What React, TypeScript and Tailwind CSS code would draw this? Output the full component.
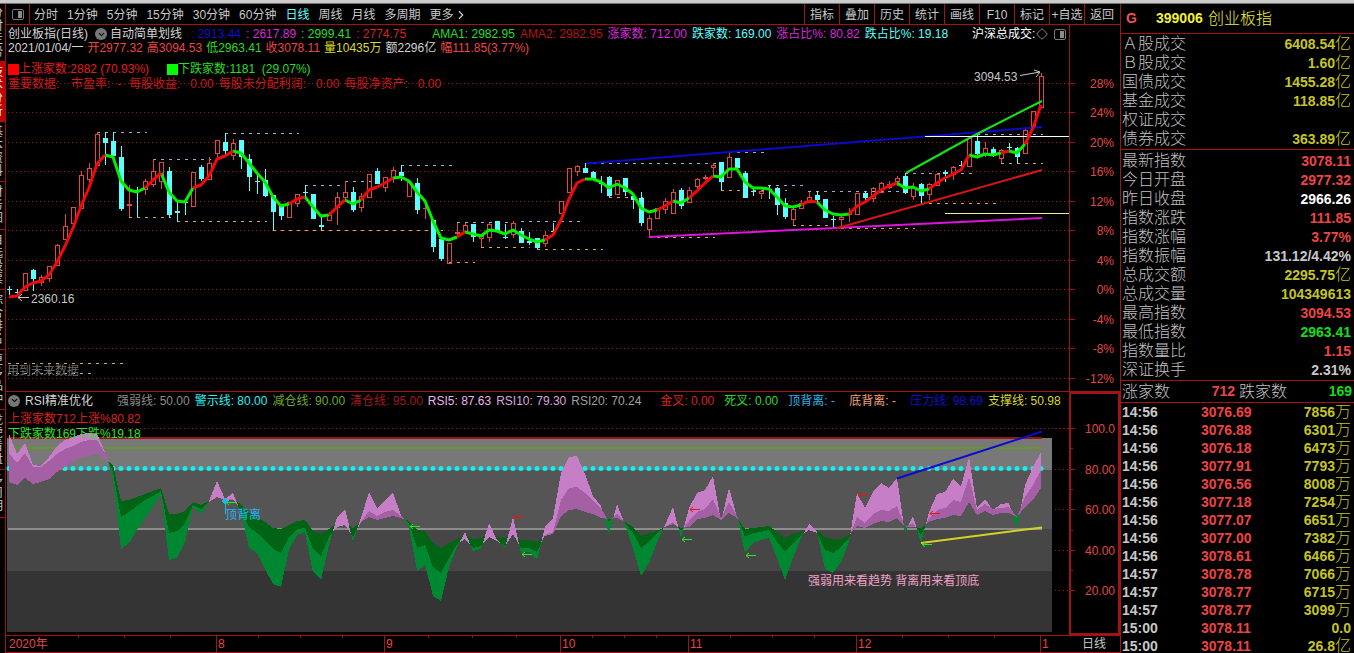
import React, { useState } from "react"
import { ChevronDown, ChevronRight, Diamond } from "lucide-react"

type Candle = [string, number, number, number, number]

// [kind, bodyTop, bodyBottom, high, low]  u = up, d = down, x = flat day, r = flat red day
const candles: Candle[] = [
  ["x", 289, 290, 286, 295], ["x", 292, 293, 289, 294], ["u", 273, 290, 273, 290], ["d", 270, 279, 269, 291],
  ["u", 277, 282, 275, 286], ["u", 266, 278, 266, 282], ["u", 245, 265, 244, 265], ["u", 226, 239, 214, 239],
  ["u", 207, 223, 207, 223], ["u", 175, 208, 171, 208], ["u", 168, 179, 163, 182], ["u", 134, 165, 132, 165],
  ["d", 138, 143, 132, 165], ["d", 141, 156, 132, 157], ["d", 157, 209, 146, 211], ["r", 204, 206, 185, 217],
  ["x", 190, 191, 187, 217], ["u", 181, 189, 179, 195], ["u", 171, 184, 159, 187], ["u", 162, 181, 162, 189],
  ["d", 171, 215, 167, 218], ["x", 211, 213, 202, 222], ["x", 202, 203, 202, 215], ["u", 172, 206, 172, 206],
  ["d", 167, 179, 165, 181], ["u", 163, 179, 157, 179], ["u", 140, 153, 140, 158], ["d", 142, 151, 133, 155],
  ["u", 143, 155, 139, 160], ["d", 140, 157, 140, 169], ["d", 159, 177, 154, 191], ["x", 181, 182, 175, 194],
  ["d", 180, 196, 169, 197], ["d", 195, 212, 195, 230], ["d", 206, 216, 206, 220], ["u", 202, 217, 202, 218],
  ["u", 194, 203, 194, 207], ["x", 192, 193, 185, 197], ["d", 194, 219, 194, 219], ["x", 225, 227, 215, 230],
  ["u", 215, 220, 212, 220], ["u", 197, 207, 192, 225], ["u", 192, 197, 181, 201], ["d", 192, 210, 187, 212],
  ["u", 196, 207, 193, 212], ["u", 174, 197, 174, 198], ["d", 171, 184, 168, 184], ["u", 177, 187, 177, 192],
  ["u", 170, 177, 167, 183], ["d", 172, 176, 165, 181], ["u", 182, 196, 182, 196], ["d", 183, 210, 178, 214],
  ["r", 208, 209, 201, 219], ["d", 220, 247, 220, 252], ["d", 239, 259, 239, 261], ["u", 243, 263, 243, 263],
  ["r", 232, 234, 223, 237], ["u", 225, 231, 223, 231], ["d", 224, 237, 224, 242], ["u", 236, 238, 236, 247],
  ["u", 224, 237, 223, 242], ["d", 221, 232, 221, 232], ["x", 237, 238, 224, 239], ["u", 223, 234, 221, 238],
  ["d", 231, 243, 228, 243], ["x", 241, 243, 232, 245], ["d", 238, 248, 238, 249], ["u", 235, 243, 231, 247],
  ["x", 231, 232, 223, 232], ["u", 201, 213, 201, 213], ["u", 168, 192, 168, 192], ["u", 166, 171, 165, 176],
  ["d", 168, 173, 163, 173], ["d", 172, 180, 171, 180], ["x", 183, 184, 176, 193], ["d", 177, 196, 176, 197],
  ["u", 180, 194, 180, 195], ["d", 178, 192, 178, 196], ["d", 196, 200, 196, 209], ["d", 198, 223, 192, 226],
  ["u", 218, 229, 215, 237], ["u", 208, 218, 208, 219], ["u", 201, 209, 198, 214], ["u", 192, 213, 189, 213],
  ["d", 190, 206, 188, 209], ["u", 190, 202, 187, 202], ["u", 179, 186, 178, 189], ["r", 177, 179, 175, 180],
  ["u", 165, 167, 163, 176], ["d", 162, 182, 162, 190], ["u", 157, 177, 153, 177], ["d", 158, 168, 158, 170],
  ["d", 173, 198, 171, 198], ["x", 191, 192, 187, 196], ["u", 191, 193, 190, 199], ["x", 189, 190, 185, 199],
  ["d", 188, 205, 187, 215], ["d", 203, 217, 198, 219], ["u", 209, 219, 208, 225], ["u", 203, 208, 200, 209],
  ["u", 197, 202, 192, 203], ["d", 195, 200, 191, 202], ["d", 199, 218, 199, 218], ["x", 219, 220, 216, 227],
  ["u", 217, 219, 215, 227], ["r", 213, 215, 208, 222], ["u", 193, 214, 193, 214], ["d", 193, 198, 191, 202],
  ["u", 188, 198, 187, 202], ["u", 183, 192, 182, 193], ["u", 184, 187, 181, 189], ["u", 178, 181, 176, 186],
  ["d", 176, 193, 173, 194], ["u", 187, 196, 183, 200], ["d", 184, 196, 183, 203], ["u", 184, 194, 183, 200],
  ["u", 174, 185, 173, 185], ["x", 172, 174, 170, 182], ["u", 167, 174, 166, 180], ["x", 165, 166, 161, 167],
  ["u", 138, 166, 138, 166], ["d", 141, 154, 134, 155], ["u", 148, 153, 142, 157], ["d", 149, 156, 147, 157],
  ["u", 150, 158, 149, 163], ["x", 147, 148, 143, 152], ["d", 148, 157, 147, 163], ["u", 130, 153, 129, 153],
  ["u", 111, 127, 111, 127], ["u", 76, 107, 73, 107],
]

const average = [
  297, 296, 287, 283, 281, 275, 262, 246, 228, 206, 188, 164, 155, 157, 181, 190, 192, 188, 180, 173,
  192, 201, 202, 188, 185, 176, 159, 156, 151, 153, 163, 173, 182, 197, 206, 204, 199, 197, 207, 216,
  215, 207, 200, 204, 200, 190, 187, 183, 178, 177, 181, 192, 201, 221, 238, 240, 237, 232, 234, 236,
  230, 231, 234, 230, 235, 239, 242, 240, 235, 220, 199, 183, 179, 179, 182, 188, 184, 188, 194, 208,
  212, 210, 206, 201, 203, 198, 191, 183, 176, 177, 169, 169, 182, 188, 188, 189, 197, 206, 207, 205,
  201, 202, 210, 214, 215, 214, 206, 202, 196, 190, 186, 183, 188, 187, 191, 189, 183, 178, 174, 170,
  155, 157, 154, 155, 153, 151, 153, 144, 128, 105,
]

// stretches of bars where the average is drawn red, the rest is green
const redRanges = [
  [0, 12], [17, 19], [23, 28], [35, 37], [40, 42], [44, 48], [56, 57], [67, 72], [81, 83],
  [85, 88], [99, 101], [105, 111], [115, 120], [124, 125], [127, 129],
]
const greenRanges = redRanges.slice(1).map((r, i) => [redRanges[i][1], r[0]])

const highDashes = [
  [97, 147, 132], [153, 211, 159], [225, 299, 133], [305, 340, 185], [345, 394, 181], [401, 452, 165],
  [457, 514, 222], [521, 580, 221], [585, 724, 163], [729, 764, 152], [768, 803, 185], [808, 900, 191],
  [905, 973, 173], [977, 1043, 134], [8, 91, 373],
]
const lowDashes = [
  [129, 171, 217], [177, 267, 221], [273, 443, 230], [449, 475, 262], [481, 530, 247], [537, 603, 249],
  [609, 643, 197], [649, 715, 237], [721, 787, 190], [793, 833, 225], [833, 915, 228], [921, 997, 203],
  [1001, 1043, 163], [8, 123, 363],
]

const priceGrid = [
  [83, "28%"], [112, "24%"], [142, "20%"], [171, "16%"], [201, "12%"], [230, "8%"],
  [260, "4%"], [289, "0%"], [319, "-4%"], [348, "-8%"], [378, "-12%"],
] as [number, string][]

const rsi5 = [
  434, 454, 443, 465, 466, 457, 446, 440, 437, 434, 433, 434, 452, 478, 549, 543, 530, 518, 507, 494,
  560, 558, 542, 506, 515, 501, 481, 499, 493, 513, 548, 553, 569, 584, 587, 550, 535, 532, 572, 580,
  545, 517, 509, 542, 518, 492, 508, 500, 493, 515, 527, 571, 565, 596, 601, 567, 547, 532, 551, 549,
  523, 540, 548, 517, 553, 552, 560, 527, 518, 473, 457, 456, 474, 496, 506, 534, 504, 525, 548, 576,
  563, 542, 525, 507, 538, 508, 493, 490, 476, 521, 488, 517, 553, 543, 540, 538, 558, 580, 558, 538,
  524, 532, 569, 573, 562, 542, 493, 508, 492, 483, 488, 478, 533, 516, 543, 512, 494, 492, 479, 486,
  457, 508, 499, 510, 504, 503, 529, 485, 467, 452,
]
const rsi10 = [
  453, 463, 453, 467, 467, 461, 454, 449, 446, 442, 440, 440, 453, 472, 517, 512, 506, 500, 496, 491,
  533, 531, 523, 505, 509, 502, 497, 500, 499, 510, 527, 533, 541, 549, 553, 537, 529, 528, 549, 556,
  537, 527, 525, 537, 522, 511, 516, 512, 510, 516, 523, 548, 545, 567, 573, 558, 544, 539, 548, 546,
  537, 541, 546, 534, 548, 548, 552, 535, 532, 500, 488, 487, 493, 501, 508, 522, 513, 523, 533, 548,
  542, 533, 527, 522, 531, 521, 512, 509, 499, 518, 502, 516, 537, 533, 532, 530, 542, 552, 543, 535,
  530, 533, 550, 553, 547, 538, 517, 523, 514, 510, 511, 506, 527, 523, 535, 518, 510, 508, 500, 502,
  477, 510, 504, 509, 508, 507, 517, 497, 485, 470,
]
const rsi20 = [
  482, 485, 478, 484, 482, 479, 472, 467, 461, 457, 456, 453, 459, 465, 501, 500, 497, 494, 491, 488,
  514, 514, 511, 502, 505, 501, 496, 500, 500, 504, 513, 517, 522, 528, 529, 525, 521, 520, 531, 534,
  529, 523, 521, 528, 522, 517, 520, 518, 516, 518, 521, 530, 531, 543, 548, 543, 539, 534, 539, 538,
  533, 537, 538, 533, 540, 540, 542, 536, 534, 516, 510, 509, 512, 514, 518, 519, 518, 522, 527, 536,
  533, 531, 527, 524, 528, 527, 519, 518, 515, 520, 513, 518, 529, 528, 527, 526, 532, 538, 534, 532,
  528, 530, 537, 539, 539, 535, 526, 528, 524, 521, 522, 518, 527, 527, 528, 522, 519, 518, 515, 516,
  502, 515, 511, 515, 513, 513, 517, 507, 500, 488,
]

const rsiGrid = [
  [428, "100.0"], [469, "80.00"], [509, "60.00"], [550, "40.00"], [590, "20.00"],
] as [number, string][]

const months = [[216, "8"], [384, "9"], [560, "10"], [688, "11"], [856, "12"], [1040, "1"]] as [number, string][]
const weekTicks = [78, 124, 170, 258, 300, 342, 428, 472, 516, 592, 624, 656, 730, 772, 814, 902, 948, 994]

const xAt = (i: number) => 9 + i * 8

function linePoints(from: number, to: number) {
  return average.slice(from, to + 1).map((y, k) => `${xAt(from + k)},${y}`).join(" ")
}

// Areas between two lines, split where they cross: [above, below]
function bands(a: number[], b: number[]) {
  let above = ""
  let below = ""
  const add = (isAbove: boolean, d: string) => {
    if (isAbove) above += d
    else below += d
  }
  for (let i = 0; i < a.length - 1; i++) {
    const x0 = xAt(i)
    const x1 = xAt(i + 1)
    const d0 = a[i] - b[i]
    const d1 = a[i + 1] - b[i + 1]
    if (d0 * d1 < 0) {
      const t = d0 / (d0 - d1)
      const cx = x0 + t * 8
      const cy = a[i] + t * (a[i + 1] - a[i])
      add(d0 < 0, `M${x0} ${a[i]}L${cx} ${cy}L${x0} ${b[i]}Z`)
      add(d1 < 0, `M${x1} ${a[i + 1]}L${cx} ${cy}L${x1} ${b[i + 1]}Z`)
    } else {
      add(d0 + d1 < 0, `M${x0} ${a[i]}L${x1} ${a[i + 1]}L${x1} ${b[i + 1]}L${x0} ${b[i]}Z`)
    }
  }
  return [above, below]
}

const sideTabs: [string, string][] = [
  ["分时走势", "h-[58px]"], ["技术分析", "h-[60px]"], ["基本资料", "h-[60px]"], ["财务图", "h-[48px]"],
  ["自选股票", "h-[60px]"], ["综合排名", "h-[60px]"], ["更多品种", "h-[60px]"], ["龙虎看盘", "h-[60px]"],
  ["多周期", "h-[48px]"],
]

const periods = ["分时", "1分钟", "5分钟", "15分钟", "30分钟", "60分钟", "日线", "周线", "月线", "多周期"]
const tools = ["指标", "叠加", "历史", "统计", "画线", "F10", "标记", "+自选", "返回"]

const turnover = [
  ["Ａ股成交", "6408.54", "亿"], ["Ｂ股成交", "1.60", "亿"], ["国债成交", "1455.28", "亿"],
  ["基金成交", "118.85", "亿"], ["权证成交", "", ""], ["债券成交", "363.89", "亿"],
]

const quote = [
  ["最新指数", "3078.11", "", "text-[#ee4444]"],
  ["今日开盘", "2977.32", "", "text-[#ee4444]"],
  ["昨日收盘", "2966.26", "", "text-white"],
  ["指数涨跌", "111.85", "", "text-[#ee4444]"],
  ["指数涨幅", "3.77%", "", "text-[#ee4444]"],
  ["指数振幅", "131.12/4.42%", "", "text-[#c8c8c8]"],
  ["总成交额", "2295.75", "亿", "text-[#c4c424]"],
  ["总成交量", "104349613", "", "text-[#c4c424]"],
  ["最高指数", "3094.53", "", "text-[#ee4444]"],
  ["最低指数", "2963.41", "", "text-[#16dc16]"],
  ["指数量比", "1.15", "", "text-[#ee4444]"],
  ["深证换手", "2.31%", "", "text-[#c8c8c8]"],
]

const ticks = [
  ["14:56", "3076.69", "7856", "万"], ["14:56", "3076.88", "6301", "万"], ["14:56", "3076.18", "6473", "万"],
  ["14:56", "3077.91", "7793", "万"], ["14:56", "3076.56", "8008", "万"], ["14:56", "3077.18", "7254", "万"],
  ["14:56", "3077.07", "6651", "万"], ["14:56", "3077.00", "7382", "万"], ["14:56", "3078.61", "6466", "万"],
  ["14:57", "3078.78", "7066", "万"], ["14:57", "3078.77", "6715", "万"], ["14:57", "3078.77", "3099", "万"],
  ["15:00", "3078.11", "0.0", ""], ["15:00", "3078.11", "26.8", "亿"],
]

function PanelIcon() {
  return (
    <svg className="h-[11px] w-3 shrink-0" viewBox="0 0 12 11" fill="none">
      <rect x="0.5" y="0.5" width="11" height="10" rx="1.5" stroke="#7a7a7a" />
      <rect x="6" y="2" width="4" height="7" fill="#8a8a8a" />
    </svg>
  )
}

function RoundToggle({ label }: { label: string }) {
  return (
    <button aria-label={label} className="flex h-3 w-3 shrink-0 items-center justify-center rounded-full bg-[#777] text-black">
      <ChevronDown size={9} strokeWidth={3} />
    </button>
  )
}

function SideTabs() {
  return (
    <nav className="flex w-[6px] shrink-0 flex-col overflow-hidden border-r border-[#a01414] text-[12px]">
      {sideTabs.map(([name, height], i) => (
        <button
          key={name}
          className={`${height} flex shrink-0 flex-col items-end justify-center border-b border-[#a01414] pr-0.5 leading-[13px] ${i === 1 ? "bg-[#c00000] text-white" : "text-[#c8c8c8]"}`}
        >
          {name.split("").map((c) => <span key={c}>{c}</span>)}
        </button>
      ))}
    </nav>
  )
}

function Toolbar() {
  const [period, setPeriod] = useState("日线")
  return (
    <div className="flex h-[21px] items-stretch border-b border-[#a01414] text-[12px] text-[#c8c8c8]">
      <button aria-label="面板" className="flex w-6 shrink-0 items-center justify-center border-r border-[#a01414]">
        <PanelIcon />
      </button>
      <div className="flex min-w-0 flex-1 items-center gap-[9px] overflow-hidden whitespace-nowrap pl-1 pt-px">
        {periods.map((p) => (
          <button key={p} onClick={() => setPeriod(p)} className={p === period ? "text-[#5cffff]" : ""}>
            {p}
          </button>
        ))}
        <button className="flex items-center">更多<ChevronRight size={14} strokeWidth={2} /></button>
      </div>
      {tools.map((t) => (
        <button key={t} className="w-[35px] shrink-0 whitespace-nowrap border-l border-[#a01414] pt-px text-center">{t}</button>
      ))}
      <div className="w-px" />
    </div>
  )
}

function PriceHeader() {
  return (
    <div className="flex whitespace-nowrap text-[12px]">
      <div className="min-w-0 flex-1 overflow-hidden border-r border-[#a01414] pl-0.5 pt-px">
        <div className="flex h-4 items-center gap-[5px] leading-4">
          <span className="w-[82px] text-[#d4d4d4]">创业板指(日线)</span>
          <RoundToggle label="指标菜单" />
          <span className="-ml-0.5 w-[76px] text-[#d4d4d4]">自动简单划线</span>
          <span className="text-[#1010c8]">: 2913.44</span>
          <span className="text-[#dc28dc]">: 2617.89</span>
          <span className="text-[#28dc28]">: 2999.41</span>
          <span className="w-[71px] text-[#dc2020]">: 2774.75</span>
          <span className="text-[#28dc28]">AMA1: 2982.95</span>
          <span className="text-[#b81414]">AMA2: 2982.95</span>
          <span className="text-[#dc28dc]">涨家数: 712.00</span>
          <span className="text-[#5cffff]">跌家数: 169.00</span>
          <span className="text-[#dc28dc]">涨占比%: 80.82</span>
          <span className="text-[#5cffff]">跌占比%: 19.18</span>
          <div className="ml-auto flex items-center pr-[3px]">
            <span className="w-16 text-white">沪深总成交:</span>
            <button aria-label="选择" className="w-[18px] text-[#8a8a8a]"><Diamond size={12} strokeWidth={2} /></button>
            <PanelIcon />
          </div>
        </div>
        <div className="flex h-[13px] items-center gap-1 leading-[13px]">
          <span className="text-[#d4d4d4]">2021/01/04/一</span>
          <span className="text-[#ee4444]">开2977.32</span>
          <span className="text-[#ee4444]">高3094.53</span>
          <span className="text-[#28dc28]">低2963.41</span>
          <span className="text-[#ee4444]">收3078.11</span>
          <span className="text-[#dcdc28]">量10435万</span>
          <span className="text-[#d4d4d4]">额2296亿</span>
          <span className="text-[#ee4444]">幅111.85(3.77%)</span>
        </div>
      </div>
      <div className="w-[50px] shrink-0" />
    </div>
  )
}

function CandleMark({ c, i }: { c: Candle; i: number }) {
  const [kind, top, bottom, high, low] = c
  const x = xAt(i)
  if (kind === "u") {
    return (
      <g stroke="#e04848" fill="none">
        {high < top && <path d={`M${x + 0.5} ${high}V${top}`} />}
        {low > bottom && <path d={`M${x + 0.5} ${bottom}V${low}`} />}
        <rect x={x - 1.5} y={top + 0.5} width="4" height={bottom - top} />
      </g>
    )
  }
  return (
    <g fill={kind === "r" ? "#e04848" : "#5cffff"}>
      <rect x={x} y={high} width="1" height={low - high} />
      <rect x={x - 2} y={top} width="5" height={Math.max(1, bottom - top)} />
    </g>
  )
}

function PriceChart() {
  return (
    <div className="relative text-[12px]">
      <svg className="block w-full" viewBox="6 55 1114 336" fontSize="12">
        <g stroke="#a01414" shapeRendering="crispEdges">
          <path d="M1069.5 55V391" />
          {priceGrid.map(([y]) => (
            <React.Fragment key={y}>
              <path d={`M8 ${y + 0.5}H1069`} strokeDasharray="1 3" />
              <path d={`M1069 ${y + 0.5}H1075`} />
            </React.Fragment>
          ))}
        </g>
        <g fill="#e04848" textAnchor="end">
          {priceGrid.map(([y, label]) => (
            <text key={label} x="1114" y={y + 5}>{label}</text>
          ))}
        </g>
        <g stroke="#b4a0dc" strokeDasharray="3 5" shapeRendering="crispEdges">
          {highDashes.map(([x1, x2, y]) => <path key={`${x1}-${y}`} d={`M${x1} ${y + 0.5}H${x2}`} />)}
        </g>
        <g stroke="#dcaa46" strokeDasharray="3 5" shapeRendering="crispEdges">
          {lowDashes.map(([x1, x2, y]) => <path key={`${x1}-${y}`} d={`M${x1} ${y + 0.5}H${x2}`} />)}
        </g>
        <g shapeRendering="crispEdges">
          {candles.map((c, i) => <CandleMark key={i} c={c} i={i} />)}
        </g>
        <g fill="none" strokeWidth="2">
          <path d="M586 163.500L1042 127" stroke="#0a0ac8" />
          <path d="M649 237L1042 218" stroke="#dc14dc" />
          <path d="M836 228.500L1042 170" stroke="#d81414" />
          <path d="M906 173L973 136L1042 101" stroke="#14e614" />
        </g>
        <path d="M925 136.500H1069" stroke="#ffffff" />
        <path d="M945 213.500H1069" stroke="#f0f08c" />
        <g fill="none" strokeWidth="3" strokeLinejoin="round">
          {greenRanges.map(([a, b]) => <polyline key={a} points={linePoints(a, b)} stroke="#00f000" />)}
          {redRanges.map(([a, b]) => <polyline key={a} points={linePoints(a, b)} stroke="#f00a0a" />)}
        </g>
        <g stroke="#c8c8c8" fill="none">
          <path d="M18 297.500H29M22 294L18 297.500L22 301" />
          <path d="M1020 75.500L1040 72M1034 70L1040 72L1036 77" />
        </g>
        <g fill="#c8c8c8">
          <text x="31" y="303">2360.16</text>
          <text x="974" y="81">3094.53</text>
        </g>
        <text x="7" y="375" fill="#70706c">用到未来数据</text>
      </svg>
      <div className="absolute left-0.5 top-[7px] whitespace-nowrap leading-[15px]">
        <div className="flex gap-[18px]">
          <span className="flex items-center text-[#e01c1c]"><i className="h-[11px] w-[11px] bg-[#ff0000]" />上涨家数:2882 (70.93%)</span>
          <span className="flex items-center text-[#28dc28]"><i className="h-[11px] w-[11px] bg-[#00ff00]" />下跌家数:1181&nbsp; (29.07%)</span>
        </div>
        <div className="flex gap-[5px] text-[#d01818]">
          <span className="w-[58px]">重要数据:</span>
          <span className="w-[53px]">市盈率:&nbsp; -</span>
          <span>每股收益:&nbsp;&nbsp; 0.00</span>
          <span>每股未分配利润:&nbsp;&nbsp; 0.00</span>
          <span>每股净资产:&nbsp;&nbsp; 0.00</span>
        </div>
      </div>
    </div>
  )
}

function RsiHeader() {
  return (
    <div className="flex whitespace-nowrap border-t border-[#a01414] text-[12px]">
      <div className="flex h-[17px] min-w-0 flex-1 items-center gap-[5px] overflow-hidden pl-0.5">
        <RoundToggle label="RSI菜单" />
        <span className="w-[87px] text-[#d4d4d4]">RSI精准优化</span>
        <span className="text-[#8c8c8c]">强弱线: 50.00</span>
        <span className="text-[#28f0f0]">警示线: 80.00</span>
        <span className="text-[#6ca82c]">减仓线: 90.00</span>
        <span className="text-[#a01818]">清仓线: 95.00</span>
        <span className="text-[#ecb4ec]">RSI5: 87.63</span>
        <span className="text-[#d8a8d8]">RSI10: 79.30</span>
        <span className="w-[84px] text-[#a0a0a0]">RSI20: 70.24</span>
        <span className="w-[59px] text-[#dc2020]">金叉: 0.00</span>
        <span className="w-[59px] text-[#28dc28]">死叉: 0.00</span>
        <span className="w-[56px] text-[#28b4e6]">顶背离: -</span>
        <span className="w-[56px] text-[#f0a078]">底背离: -</span>
        <span className="text-[#1010c8]">压力线: 98.69</span>
        <span className="text-[#d8d828]">支撑线: 50.98</span>
      </div>
      <div className="w-[51px] shrink-0 border-x-2 border-t-2 border-[#a01414]" />
    </div>
  )
}

function Arrow({ x, y, color }: { x: number; y: number; color: string }) {
  return <path d={`M${x} ${y + 0.5}h10M${x + 3} ${y - 2}l-3 2.500l3 2.500`} stroke={color} fill="none" />
}

function RsiChart() {
  const [light, bright] = bands(rsi5, rsi10)
  const [purple, dark] = bands(rsi10, rsi20)
  return (
    <div className="relative text-[12px]">
      <svg className="block w-full" viewBox="6 409 1114 244" fontSize="12">
        <g shapeRendering="crispEdges">
          <rect x="7" y="438" width="1045" height="32" fill="#787878" />
          <rect x="7" y="470" width="1045" height="59" fill="#555555" />
          <rect x="7" y="529" width="1045" height="42" fill="#464646" />
          <rect x="7" y="571" width="1045" height="61" fill="#343434" />
          <path d="M8 428.500H1069" stroke="#a01414" strokeDasharray="1 3" />
          <rect x="8" y="437" width="1034" height="2" fill="#961414" />
          <rect x="8" y="447" width="1034" height="2" fill="#649628" />
          <rect x="8" y="528" width="1034" height="2" fill="#8c8c8c" />
        </g>
        <path d="M9 468.500H1042" stroke="#14f0f0" strokeWidth="5" strokeLinecap="round" strokeDasharray="0 8" />
        <g shapeRendering="crispEdges">
          <path d={dark} fill="#006414" />
          <path d={bright} fill="#008732" />
          <path d={purple} fill="#a560a5" />
          <path d={light} fill="#c67ec6" />
        </g>
        <g fill="none" strokeWidth="2">
          <path d="M897 478.500L1042 431.500" stroke="#0a0ad2" />
          <path d="M921 543L1042 527.500" stroke="#d2d228" />
        </g>
        <Arrow x={514} y={517} color="#e61414" />
        <Arrow x={690} y={509} color="#e61414" />
        <Arrow x={858} y={495} color="#e61414" />
        <Arrow x={930} y={513} color="#e61414" />
        <Arrow x={410} y={526} color="#28e628" />
        <Arrow x={522} y={554} color="#28e628" />
        <Arrow x={682} y={539} color="#28e628" />
        <Arrow x={746} y={555} color="#28e628" />
        <Arrow x={922} y={544} color="#28e628" />
        <Arrow x={226} y={502} color="#28e628" />
        <path d="M225 498l3 3l-3 3l-3-3zM225.500 501V514" fill="#1eb4f0" stroke="#1eb4f0" />
        <text x="225" y="519" fill="#1eb4f0">顶背离</text>
        <text x="808" y="585" fill="#f0a0c8">强弱用来看趋势 背离用来看顶底</text>

        <g stroke="#a01414" shapeRendering="crispEdges" fill="none">
          <path d="M1070 409V634H1119V409" strokeWidth="2" />
          <path d="M6 635.500H1120M6 652.500H1120" />
          {rsiGrid.map(([y]) => (
            <React.Fragment key={y}>
              <path d={`M1055 ${y + 0.5}H1069`} strokeDasharray="1 3" />
              <path d={`M1069 ${y + 0.5}H1075`} />
            </React.Fragment>
          ))}
          {[448, 489, 530, 570].map((y) => <path key={y} d={`M1070 ${y + 0.5}H1073`} />)}
          {months.map(([x]) => <path key={x} d={`M${x + 0.5} 635V653`} />)}
          {weekTicks.map((x) => <path key={x} d={`M${x + 0.5} 635V638`} />)}
        </g>
        <g fill="#e04848">
          {rsiGrid.map(([y, label]) => <text key={label} x="1115" y={y + 5} textAnchor="end">{label}</text>)}
          <text x="9" y="648">2020年</text>
          {months.map(([x, label]) => <text key={x} x={x + 2} y="648">{label}</text>)}
        </g>
        <text x="1082" y="648" fill="#c8c8c8">日线</text>
      </svg>
      <div className="absolute left-0.5 top-[3px] whitespace-nowrap leading-[15px]">
        <p className="text-[#dc2020]">上涨家数712上涨%80.82</p>
        <p className="text-[#28e628]">下跌家数169下跌%19.18</p>
      </div>
    </div>
  )
}

function Unit({ children }: { children: React.ReactNode }) {
  return <span className="text-[16px] font-light leading-none">{children}</span>
}

function QuotePanel() {
  return (
    <aside className="w-[234px] shrink-0 overflow-hidden border-l border-[#a01414] text-[14px] font-bold">
      <h1 className="flex h-[30px] items-center border-b border-[#a01414] pl-[5px] text-[#f0f03c]">
        <span className="w-[30px] text-[#ee5050]">G</span>
        <span className="w-[52px]">399006</span>
        <span className="text-[16px] font-light">创业板指</span>
      </h1>
      <div className="border-b border-[#a01414] pb-px">
        <table className="w-full">
          <tbody>
            {turnover.map(([name, value, unit]) => (
              <tr key={name} className="h-[19px] leading-[18px]">
                <th className="p-0 pl-px text-left text-[16px] font-light text-[#c0c0c0]">{name}</th>
                <td className="p-0 pr-[3px] text-right text-[#c4c424]">{value}<Unit>{unit}</Unit></td>
              </tr>
            ))}
          </tbody>
        </table>
      </div>
      <div className="border-b border-[#a01414] py-px">
        <table className="w-full">
          <tbody>
            {quote.map(([name, value, unit, color]) => (
              <tr key={name} className="h-[19px] leading-[18px]">
                <th className="p-0 pl-px text-left text-[16px] font-light text-[#c0c0c0]">{name}</th>
                <td className={`p-0 pr-[3px] text-right ${color}`}>{value}{unit && <Unit>{unit}</Unit>}</td>
              </tr>
            ))}
          </tbody>
        </table>
      </div>
      <div className="flex h-[22px] items-center border-b border-[#a01414] pl-px pr-0.5 text-[#c0c0c0]">
        <span className="text-[16px] font-light">涨家数</span>
        <span className="flex-1 text-right text-[#ee4444]">712</span>
        <span className="pl-1 text-[16px] font-light">跌家数</span>
        <span className="flex-1 text-right text-[#16dc16]">169</span>
      </div>
      <table className="w-full">
        <tbody>
          {ticks.map(([time, price, amount, unit], i) => (
            <tr key={i} className="h-[18px] leading-[18px]">
              <td className="w-20 p-0 pl-px text-[#c8c8c8]">{time}</td>
              <td className="p-0 text-[#ee4444]">{price}</td>
              <td className="p-0 pr-[3px] text-right text-[#c4c424]">{amount}{unit && <Unit>{unit}</Unit>}</td>
            </tr>
          ))}
        </tbody>
      </table>
    </aside>
  )
}

function App() {
  return (
    <div className="flex h-screen flex-col overflow-hidden bg-black font-['Liberation_Sans','Noto_Sans_CJK_SC',sans-serif]">
      <div className="h-1 shrink-0 border-b border-[#707070] bg-[#cccccc]" />
      <div className="flex min-h-0 flex-1">
        <SideTabs />
        <main className="min-w-0 flex-1">
          <Toolbar />
          <PriceHeader />
          <PriceChart />
          <RsiHeader />
          <RsiChart />
        </main>
        <QuotePanel />
      </div>
    </div>
  )
}

export default App
